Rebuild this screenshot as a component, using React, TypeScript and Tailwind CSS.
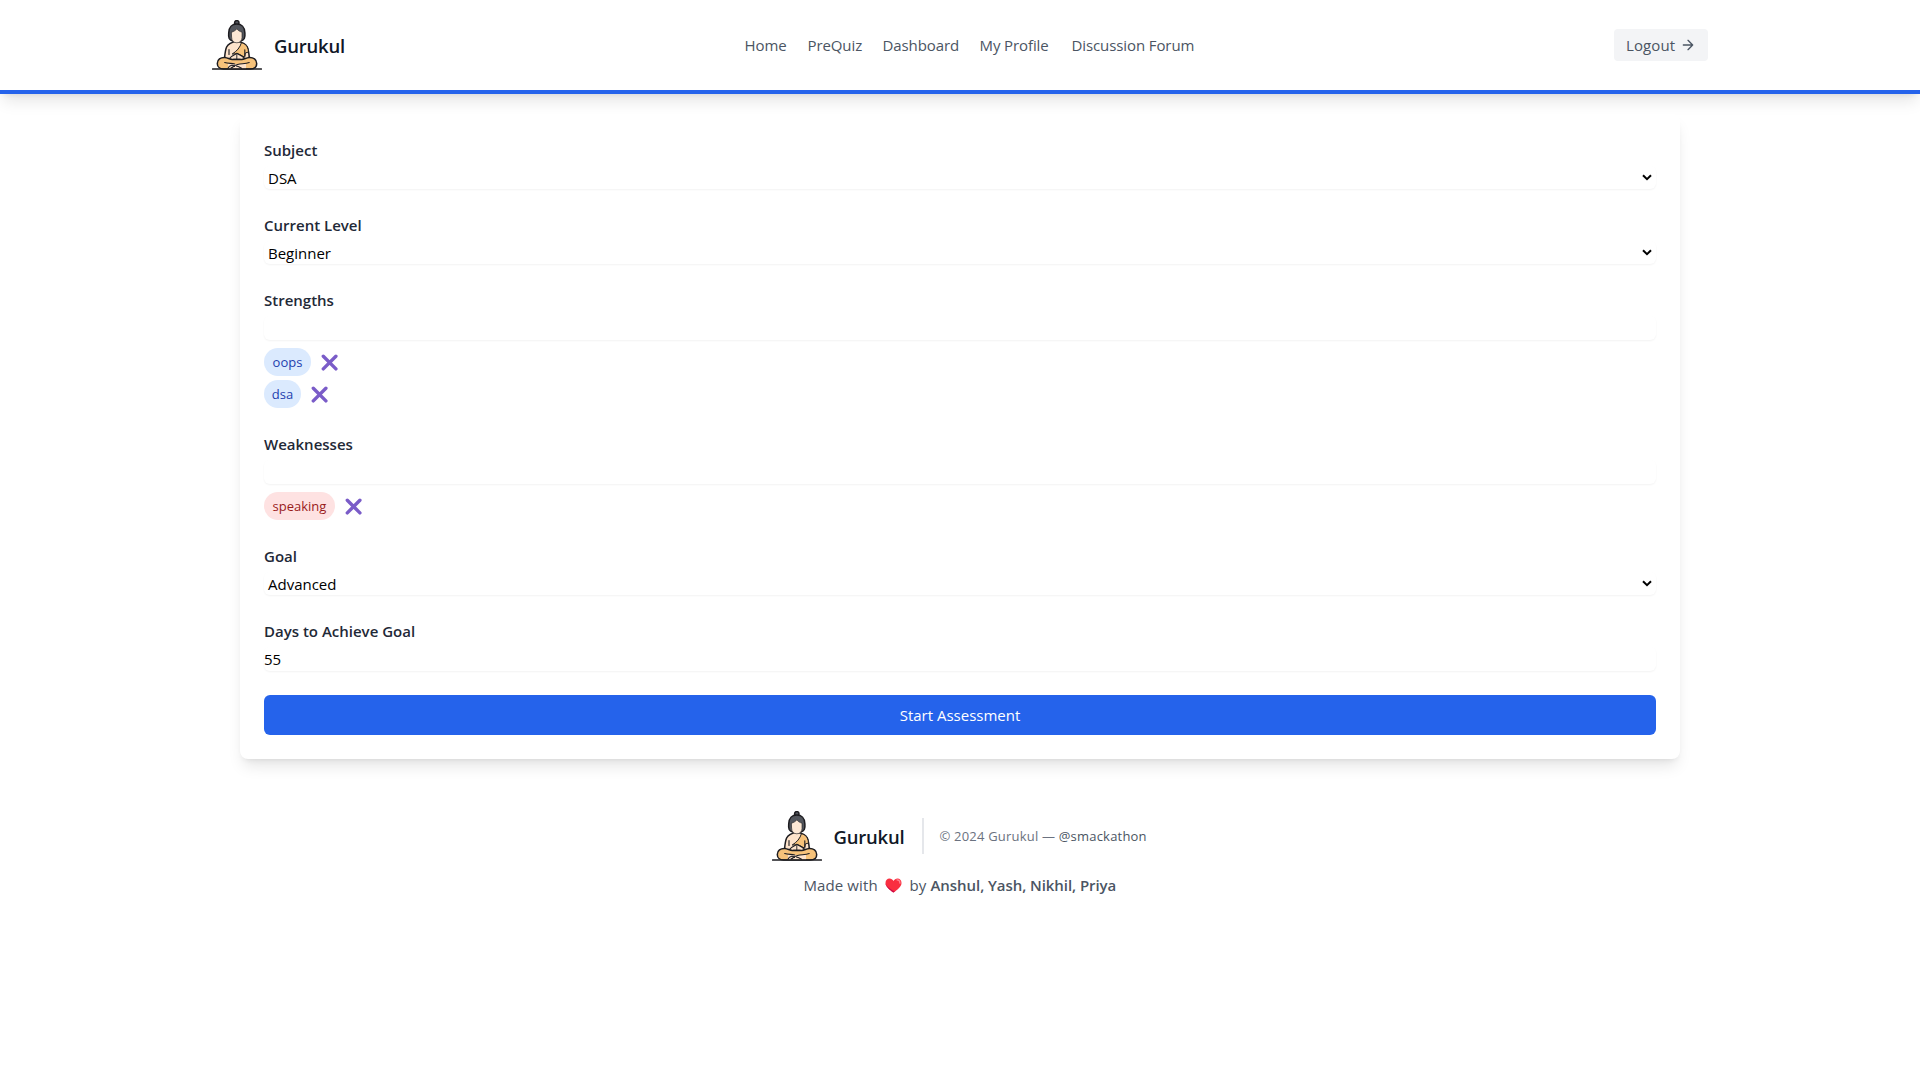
import React from "react";

function BuddhaLogo() {
  return (
    <svg width="50" height="50" viewBox="0 0 50 50" fill="none" stroke="#1d1c20" strokeWidth="1.5" strokeLinecap="round" strokeLinejoin="round" className="shrink-0">
      <circle cx="24.8" cy="2.8" r="2.2" fill="#53565d" />
      <path d="M17.2 18.5c-.8-2-.7-3.600-.5-5.500C16.700 7 20.300 4 24.800 4s8.100 3 8.100 9c.2 1.900.2 3.500-.6 5.500-.8 1.700-2 2.200-3.300 2.500h-8.400c-1.300-.3-2.600-.8-3.400-2.500Z" fill="#53565d" />
      <path d="M24.800 21.500c-4 .4-8.500 1.900-10.200 5.500-1.300 3-1.600 6-2 10.500l3.400 3.500h17.600l3.700-3.500c-.4-4.500-.7-7.500-2-10.500-1.700-3.600-6.500-5.100-10.500-5.500Z" fill="#fde3cb" />
      <path d="M29.500 22.600c2.600.9 4.800 2.200 5.800 4.400.8 1.800 1 3.300 1.200 5l-3.200 1-.6 4.200-6.300-3.400-6.200.2c4.500-2.600 8-6.600 9.300-11.400Z" fill="#f6c27a" strokeWidth="1" />
      <path d="M19.600 12.200c2.200-.6 4.200-1.800 5.200-3.400 1 1.600 3 2.800 5.200 3.400v5.300c0 3.200-2.200 5.300-5.200 5.300s-5.200-2.100-5.200-5.300Z" fill="#fde8d5" strokeWidth=".6" />
      <path d="M17 29.500v5M32.800 29.800v6" strokeWidth="1.100" />
      <path d="M16.500 39.500c1.500-2.300 4.300-4.100 7.300-5.500.5-1 1.600-1 2 0 3 1.400 6 3.200 7.500 5.500" fill="#fde3cb" strokeWidth="1.100" />
      <path d="M13 37.500c-4.500-.3-7.700 2-7.700 5.900 0 3.500 2.700 5.500 6.200 5.500h26.800c3.700 0 6.400-2 6.400-5.500 0-3.900-3.300-6.200-7.700-5.900-3 .5-5 1.900-7.200 1.900h-9.600c-2.200 0-4.200-1.400-7.200-1.900Z" fill="#f6c27a" />
      <path d="M16 43.200c4.200.9 13.500.9 18 0v5.300H16Z" fill="#fde3cb" strokeWidth="0" />
      <path d="M12.700 42.500c3.500 1.200 7 .6 10 1.500M37.200 42.500c-5 1.800-11 .6-14.700 3.300-1 .7-2.200 1.700-3.500 2.200M16 48.200c1.500-3.200 4.500-3.600 6.500-1.800M24.500 46c2 .3 3.500 1.300 5 2.300" strokeWidth="1.100" />
      <path d="M24.800 34.500v4.300M21.600 39.200h6.600" strokeWidth=".9" />
      <path d="M.6 49.100h48.800" />
    </svg>
  );
}

function Brand() {
  return (
    <a className="flex items-center text-[#111827]">
      <BuddhaLogo />
      <span className="mt-0.5 ml-3 h-7 w-[72px] text-[18.500px] leading-7 font-semibold tracking-[-0.2px]">Gurukul</span>
    </a>
  );
}

function CrossMark() {
  return (
    <button type="button" aria-label="Remove" className="ml-2.5">
      <svg width="17" height="17" viewBox="0 0 17 17" fill="none" stroke="#7a5cc8" strokeWidth="3.400" strokeLinecap="round">
        <path d="M2.300 2.300 14.900 14.900M14.900 2.300 2.300 14.900" />
      </svg>
    </button>
  );
}

function Tag({ text, className }: { text: string; className: string }) {
  return (
    <div className="flex h-7 items-center">
      <span className={`h-7 rounded-full text-center text-[13px] leading-7 ${className}`}>{text}</span>
      <CrossMark />
    </div>
  );
}

const labelClass = "mb-1 block h-6 leading-6 font-semibold text-[#1f2937]";

function SelectField({ label, value }: { label: string; value: string }) {
  return (
    <div className="mb-6">
      <label className={labelClass}>{label}</label>
      <div className="flex h-[23px] items-center justify-between rounded-md pr-1 pl-1 text-black shadow-xs">
        <span className="leading-6">{value}</span>
        <svg width="10" height="7" viewBox="0 0 10 7" fill="none" stroke="black" strokeWidth="2">
          <path d="M1 1.200 5 5.200 9 1.200" />
        </svg>
      </div>
    </div>
  );
}

function InputField({ label, value, children }: { label: string; value?: string; children?: React.ReactNode }) {
  return (
    <div className="mb-6">
      <label className={labelClass}>{label}</label>
      <div className="h-6 rounded-md leading-6 text-black shadow-xs">{value}</div>
      {children && <div className="mt-2 space-y-1">{children}</div>}
    </div>
  );
}

export default function App() {
  return (
    <div className="min-h-screen bg-white font-['Open_Sans',sans-serif] text-[15px]">
      <header className="h-[94px] border-b-4 border-[#2563eb] text-[#4b5563] shadow-lg">
        <div className="mx-auto flex h-[90px] max-w-[1536px] items-center px-5">
          <Brand />
          <nav className="mr-auto ml-auto flex h-6 items-center gap-5 pr-5 leading-6 tracking-[-0.1px]">
            <a className="w-[43px] whitespace-nowrap">Home</a>
            <a className="w-[55px] whitespace-nowrap">PreQuiz</a>
            <a className="w-[77px] whitespace-nowrap">Dashboard</a>
            <a className="w-[72px] whitespace-nowrap">My Profile</a>
            <a className="w-[124px] whitespace-nowrap">Discussion Forum</a>
          </nav>
          <button className="flex h-8 w-[94px] items-center rounded bg-[#f3f4f6] pl-3 leading-6">
            <span className="w-[50px] text-left tracking-[0.1px]">Logout</span>
            <svg width="16" height="16" viewBox="0 0 24 24" fill="none" stroke="currentColor" strokeWidth="2" strokeLinecap="round" strokeLinejoin="round" className="ml-1">
              <path d="M5 12h14M12 5l7 7-7 7" />
            </svg>
          </button>
        </div>
      </header>

      <main className="mx-auto mt-5 w-[1440px] rounded-lg bg-white p-6 shadow-lg">
        <SelectField label="Subject" value="DSA" />
        <SelectField label="Current Level" value="Beginner" />
        <InputField label="Strengths">
          <Tag text="oops" className="w-[47px] bg-[#dbeafe] text-[#1e40af]" />
          <Tag text="dsa" className="w-[37px] bg-[#dbeafe] text-[#1e40af]" />
        </InputField>
        <InputField label="Weaknesses">
          <Tag text="speaking" className="w-[71px] bg-[#fee2e2] text-[#991b1b]" />
        </InputField>
        <SelectField label="Goal" value="Advanced" />
        <InputField label="Days to Achieve Goal" value="55" />
        <button className="h-10 w-full rounded-md bg-[#2563eb] text-white">Start Assessment</button>
      </main>

      <footer className="mt-[52px] flex flex-col items-center text-[#4b5563]">
        <div className="flex h-[50px] items-center">
          <Brand />
          <p className="ml-4 h-9 w-[227px] border-l-2 border-[#e5e7eb] pl-4 text-[13px] leading-9 tracking-[0.2px] whitespace-nowrap text-[#6b7280]">
            © 2024 Gurukul — <a className="text-[#4b5563]">@smackathon</a>
          </p>
        </div>
        <p className="mt-3 flex h-6 items-center leading-6">
          <span className="w-[75px] tracking-[0.1px]">Made with</span>
          <svg width="17" height="15" viewBox="0 0 17 15" className="mr-2 ml-1.5">
            <path d="M8.500 14.500C5 12 .5 8.700.5 4.900.5 2.300 2.300.6 4.500.6c1.700 0 3.200 1 4 2.500.8-1.500 2.300-2.500 4-2.500 2.200 0 4 1.700 4 4.300 0 3.800-4.500 7.100-8 9.600Z" fill="#f92f40" />
            <path d="M12 1.800c2 .1 3 1.400 2.900 3.300" stroke="#ff8792" strokeWidth="1.300" strokeLinecap="round" fill="none" />
            <path d="M8.500 14.500C5 12 .5 8.700.5 4.900c1 4 5 6 9.300 8.600Z" fill="#ca0b4a" />
          </svg>
          <span className="w-[21px]">by</span>
          <span className="w-[186px] font-semibold tracking-[-0.06px] whitespace-nowrap">Anshul, Yash, Nikhil, Priya</span>
        </p>
      </footer>
    </div>
  );
}
